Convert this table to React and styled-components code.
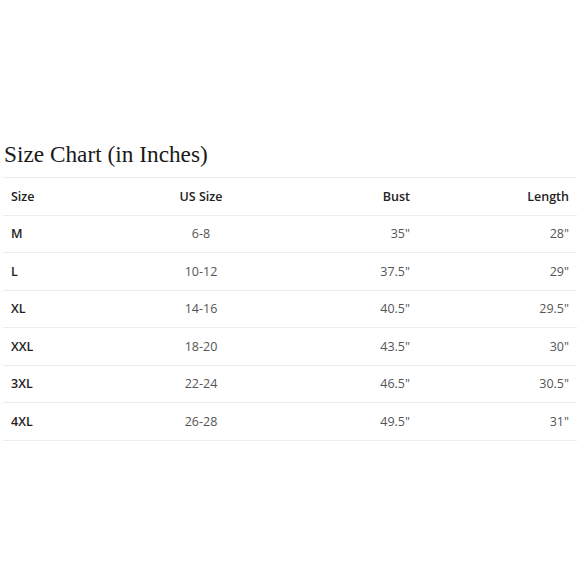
import styled, { createGlobalStyle } from "styled-components";

const GlobalStyle = createGlobalStyle`
  body {
    margin: 0;
    background: #fff;
  }
`;

const Page = styled.div`
  width: 580px;
  height: 580px;
  padding: 140px 3px 0 3px;
  box-sizing: border-box;
`;

const Title = styled.h2`
  margin: 0 0 9px 1px;
  font-family: "Liberation Serif", "DejaVu Serif", serif;
  font-weight: 400;
  font-size: 23.3px;
  line-height: 28px;
  color: #1a1a1a;
`;

const Table = styled.div`
  display: flex;
  flex-direction: column;
  border-top: 1px solid #ececec;
  font-family: "Open Sans", "Liberation Sans", sans-serif;
`;

const Row = styled.div`
  display: grid;
  grid-template-columns: 120px 156px 139px 159px;
  align-items: center;
  height: 37.5px;
  box-sizing: border-box;
  border-bottom: 1px solid #ececec;
  font-size: 12.5px;
  font-weight: ${(p) => (p.$head ? 600 : 400)};
  color: ${(p) => (p.$head ? "#222" : "#555")};
`;

const Cell = styled.span`
  padding: 0 8px;
  text-align: ${(p) => p.$align || "left"};
  font-weight: ${(p) => (p.$bold ? 600 : "inherit")};
  color: ${(p) => (p.$bold ? "#222" : "inherit")};
`;

const rows = [
  ["M", "6-8", '35"', '28"'],
  ["L", "10-12", '37.5"', '29"'],
  ["XL", "14-16", '40.5"', '29.5"'],
  ["XXL", "18-20", '43.5"', '30"'],
  ["3XL", "22-24", '46.5"', '30.5"'],
  ["4XL", "26-28", '49.5"', '31"'],
];

const App = () => {
  return (
    <>
      <GlobalStyle />
      <Page>
        <Title>Size Chart (in Inches)</Title>
        <Table>
          <Row $head>
            <Cell>Size</Cell>
            <Cell $align="center">US Size</Cell>
            <Cell $align="right">Bust</Cell>
            <Cell $align="right">Length</Cell>
          </Row>
          {rows.map((r) => (
            <Row key={r[0]}>
              <Cell $bold>{r[0]}</Cell>
              <Cell $align="center">{r[1]}</Cell>
              <Cell $align="right">{r[2]}</Cell>
              <Cell $align="right">{r[3]}</Cell>
            </Row>
          ))}
        </Table>
      </Page>
    </>
  );
};

export default App;
